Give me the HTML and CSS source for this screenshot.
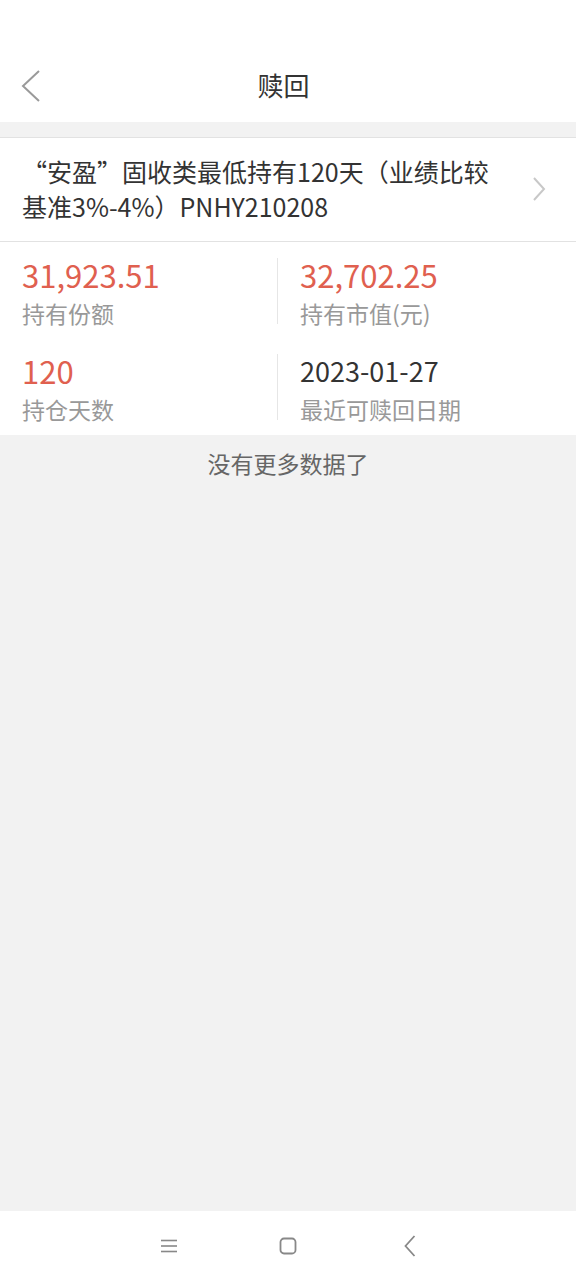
FILE: index.html
```html
<!DOCTYPE html>
<html lang="zh-CN">
<head>
<meta charset="utf-8">
<title>赎回</title>
<link rel="stylesheet" href="styles.css">
</head>
<body>
<div class="page">
  <div class="status"></div>
  <header class="nav">
    <svg class="nav-back" width="20" height="32" viewBox="0 0 20 32"><polyline points="18,1 2,16 18,31" fill="none" stroke="#9a9a9a" stroke-width="2"/></svg>
    <div class="nav-title">赎回</div>
  </header>
  <div class="gap"></div>
  <div class="product">
    <div class="product-name">“安盈”固收类最低持有120天（业绩比较基准3%-4%）PNHY210208</div>
    <svg class="product-arrow" width="14" height="26" viewBox="0 0 14 26"><polyline points="2,2 12,13 2,24" fill="none" stroke="#c8c8c8" stroke-width="2"/></svg>
  </div>
  <div class="stats">
    <div class="stat-row">
      <div class="stat"><div class="num red">31,923.51</div><div class="label">持有份额</div></div>
      <div class="stat divided"><div class="num red">32,702.25</div><div class="label">持有市值(元)</div></div>
    </div>
    <div class="stat-row">
      <div class="stat"><div class="num red">120</div><div class="label">持仓天数</div></div>
      <div class="stat divided"><div class="num dark date">2023-01-27</div><div class="label">最近可赎回日期</div></div>
    </div>
  </div>
  <div class="nomore">没有更多数据了</div>
  <div class="fill"></div>
  <footer class="sysbar">
    <svg class="sys-menu" width="18" height="14" viewBox="0 0 18 14"><g stroke="#888" stroke-width="1.6"><line x1="1" y1="1.5" x2="17" y2="1.5"/><line x1="1" y1="7" x2="17" y2="7"/><line x1="1" y1="12.5" x2="17" y2="12.5"/></g></svg>
    <svg class="sys-home" width="18" height="18" viewBox="0 0 18 18"><rect x="1.5" y="1.5" width="15" height="15" rx="3.5" fill="none" stroke="#888" stroke-width="1.8"/></svg>
    <svg class="sys-back" width="12" height="22" viewBox="0 0 12 22"><polyline points="10.5,1 1.5,11 10.5,21" fill="none" stroke="#888" stroke-width="1.8"/></svg>
  </footer>
</div>
</body>
</html>
```
FILE: styles.css
```css
* { box-sizing: border-box; }
html, body { margin: 0; padding: 0; }
body {
  font-family: "Noto Sans CJK SC", "Noto Sans", sans-serif;
  background: #f2f2f2;
  width: 576px;
  height: 1280px;
  overflow: hidden;
}
.page {
  display: flex;
  flex-direction: column;
  height: 1280px;
}
.status { height: 48px; background: #fff; }
.nav {
  height: 74px;
  background: #fff;
  display: flex;
  align-items: center;
  justify-content: center;
  padding-right: 9px;
  position: relative;
}
.nav-back { position: absolute; left: 21px; top: 22px; }
.nav-title { font-size: 26px; color: #333; line-height: 36px; }
.gap { height: 15px; background: #f2f2f2; }
.product {
  background: #fff;
  border-top: 1px solid #e2e2e2;
  border-bottom: 1px solid #e2e2e2;
  padding: 16px 30px 17px 22px;
  display: flex;
  align-items: center;
  gap: 30px;
}
.product-name {
  flex: 1;
  font-size: 25px;
  line-height: 35px;
  color: #333;
}
.product-arrow { flex: none; }
.stats {
  background: #fff;
  padding: 16px 0 15px;
  display: flex;
  flex-direction: column;
  gap: 30px;
}
.stat-row { display: flex; }
.stat {
  width: 277px;
  padding-left: 22px;
  height: 66px;
}
.stat.divided {
  width: 299px;
  border-left: 1px solid #e6e6e6;
}
.num { font-size: 31px; line-height: 34px; height: 34px; }
.num.date { font-size: 27px; }
.red { color: #e0604f; }
.dark { color: #333; }
.label { font-size: 23px; line-height: 30px; color: #999; margin-top: 6px; }
.nomore {
  text-align: center;
  font-size: 23px;
  color: #666;
  line-height: 30px;
  padding-top: 13px;
}
.fill { flex: 1; }
.sysbar {
  height: 69px;
  background: #fff;
  display: flex;
  align-items: center;
  padding-left: 160px;
}
.sys-home { margin-left: 101px; }
.sys-back { margin-left: 107px; }
```
